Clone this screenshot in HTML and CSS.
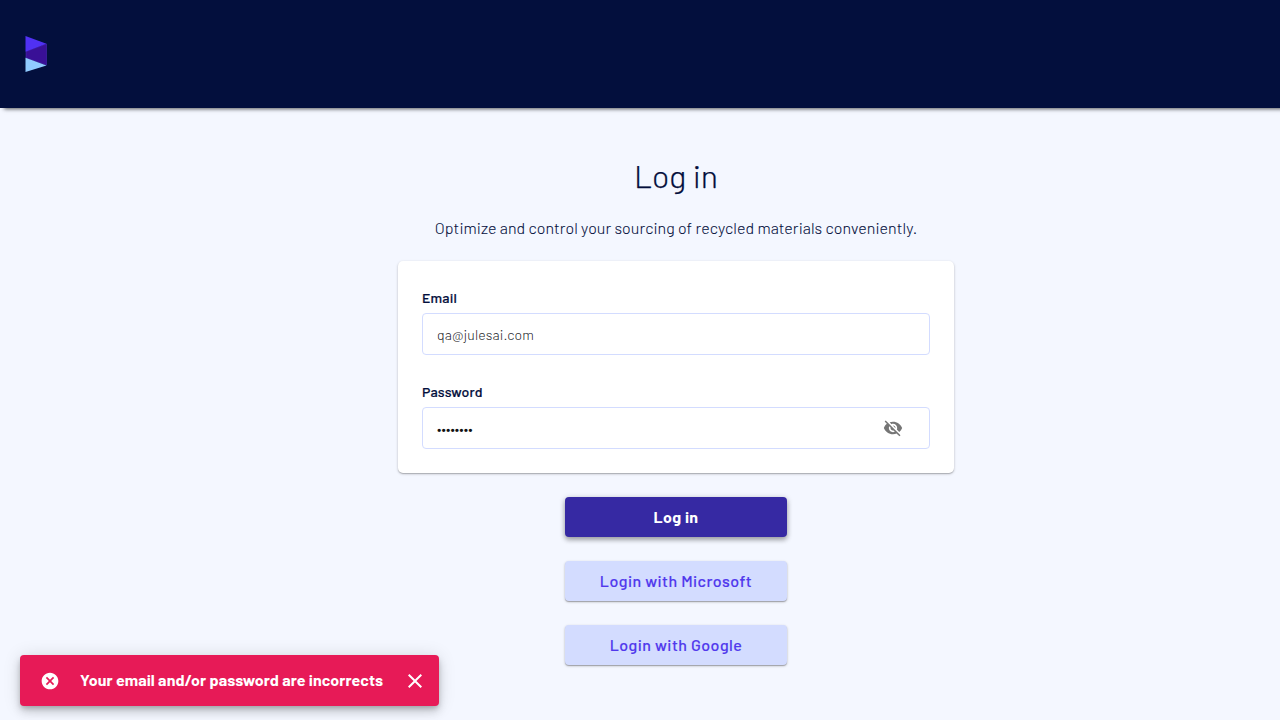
FILE: index.html
```html
<!DOCTYPE html>
<html lang="en">
<head>
<meta charset="utf-8">
<title>Log in</title>
<link rel="stylesheet" href="styles.css">
</head>
<body>
<header class="topbar">
  <svg class="logo" width="24" height="38" viewBox="0 0 24 38" aria-label="Logo">
    <path fill="#391096" stroke="#4925b5" stroke-width=".6" d="M1 16.500 21.500 9v21L1 23z"/>
    <path fill="#5031f3" d="M.5 1 21.500 8.800 .5 16.700z"/>
    <path fill="#90cbff" d="M.5 22.800 21.500 30.400 .5 37z"/>
  </svg>
</header>
<main class="content">
  <h1 class="title">Log in</h1>
  <p class="subtitle">Optimize and control your sourcing of recycled materials conveniently.</p>
  <form class="form">
    <section class="card">
      <div class="field">
        <label class="label" for="email">Email</label>
        <div class="control"><input class="input" id="email" type="text" value="qa@julesai.com"></div>
      </div>
      <div class="field">
        <label class="label" for="password">Password</label>
        <div class="control">
          <span class="input dots" id="password">••••••••</span>
          <svg class="eye" width="20" height="20" viewBox="0 0 24 24"><path fill="#757575" d="M12 7c2.760 0 5 2.240 5 5 0 .650-.130 1.260-.360 1.830l2.920 2.920c1.510-1.260 2.700-2.890 3.430-4.750-1.730-4.390-6-7.500-11-7.500-1.400 0-2.740.250-3.980.700l2.160 2.160C10.740 7.130 11.350 7 12 7zM2 4.270l2.280 2.280.460.460C3.080 8.300 1.780 10.020 1 12c1.730 4.390 6 7.500 11 7.500 1.550 0 3.030-.300 4.380-.840l.420.420L19.730 22 21 20.730 3.270 3 2 4.270zM7.530 9.800l1.550 1.550c-.050.210-.080.430-.080.650 0 1.660 1.340 3 3 3 .220 0 .440-.030.650-.080l1.550 1.550c-.670.330-1.410.530-2.200.530-2.760 0-5-2.240-5-5 0-.790.200-1.530.530-2.200zm4.310-.780l3.150 3.150.020-.160c0-1.660-1.340-3-3-3l-.170.010z"/></svg>
        </div>
      </div>
    </section>
    <button class="btn primary" type="button">Log in</button>
    <button class="btn secondary" type="button">Login with Microsoft</button>
    <button class="btn secondary" type="button">Login with Google</button>
  </form>
</main>
<aside class="snackbar" role="alert">
  <svg class="error-icon" width="20" height="20" viewBox="0 0 24 24"><path fill="#fff" d="M12 2C6.470 2 2 6.470 2 12s4.470 10 10 10 10-4.470 10-10S17.530 2 12 2zm5 13.590L15.590 17 12 13.410 8.410 17 7 15.590 10.590 12 7 8.410 8.410 7 12 10.590 15.590 7 17 8.410 13.410 12 17 15.590z"/></svg>
  <span class="message">Your email and/or password are incorrects</span>
  <svg class="close" width="24" height="24" viewBox="0 0 24 24"><path fill="#fff" d="M19 6.410L17.590 5 12 10.590 6.410 5 5 6.410 10.590 12 5 17.590 6.410 19 12 13.410 17.590 19 19 17.590 13.410 12z"/></svg>
</aside>
</body>
</html>
```
FILE: styles.css
```css
* { box-sizing: border-box; }
body {
  margin: 0;
  height: 720px;
  overflow: hidden;
  background: #f4f7ff;
  color: #030e3c;
  font-family: Barlow, Roboto, "Liberation Sans", sans-serif;
}
.topbar {
  height: 108px;
  padding: 35px 25px;
  background: #030f3d;
  box-shadow: 4px 1px 4px rgba(0,0,0,.65);
}
.logo { display: block; }
.content {
  display: flex;
  flex-direction: column;
  align-items: center;
  padding: 47px 0 0 72px;
}
.title { margin: 0; font-size: 32px; font-weight: 300; line-height: 40px; -webkit-text-stroke: .25px #030e3c; }
.subtitle { margin: 21px 0 0; font-size: 16px; font-weight: 300; line-height: 24px; letter-spacing: .045px; -webkit-text-stroke: .1px #030e3c; }
.form { display: flex; flex-direction: column; align-items: center; gap: 24px; margin-top: 21px; }
.card {
  display: flex;
  flex-direction: column;
  gap: 28px;
  width: 556px;
  height: 212px;
  padding: 27px 24px 24px;
  border-radius: 5px;
  background: #fff;
  box-shadow: 0 1px 3px rgba(0,0,0,.2), 0 1px 1px rgba(0,0,0,.18);
}
.field { display: flex; flex-direction: column; gap: 5px; }
.field + .field { margin-top: -1px; }
.label { font-size: 14px; font-weight: 500; line-height: 20px; letter-spacing: .18px; -webkit-text-stroke: .2px #030e3c; }
.control {
  display: flex;
  align-items: center;
  height: 42px;
  padding: 2px 26px 0 14px;
  border: 1px solid #d3dcff;
  border-radius: 4px;
}
.input {
  flex: 1;
  min-width: 0;
  padding: 0;
  border: 0;
  outline: 0;
  background: none;
  color: #18181e;
  font: 300 14px/20px Barlow, Roboto, sans-serif;
  letter-spacing: .14px;
}
.dots { color: #111; font-weight: 400; }
.eye { margin-top: -2px; }
.btn {
  width: 222px;
  height: 40px;
  padding: 0;
  border: 0;
  border-radius: 4px;
  font: 500 16px/24px Barlow, Roboto, sans-serif;
  letter-spacing: .45px;
}
.primary {
  background: #3629a3;
  color: #fff;
  font-weight: 700;
  letter-spacing: .3px;
  box-shadow: 0 3px 5px rgba(0,0,0,.28), 0 1px 6px rgba(0,0,0,.18);
}
.secondary {
  background: #d3dcff;
  color: #5038ed;
  -webkit-text-stroke: .15px #5038ed;
  box-shadow: 0 1px 3px rgba(0,0,0,.2), 0 1px 1px rgba(0,0,0,.24);
}
.snackbar {
  position: absolute;
  left: 20px;
  top: 655px;
  display: flex;
  align-items: center;
  width: 419px;
  height: 51px;
  padding: 0 12px 0 20px;
  border-radius: 4px;
  background: #e71a57;
  color: #fff;
  box-shadow: 0 3px 5px -1px rgba(0,0,0,.2), 0 6px 10px rgba(0,0,0,.14), 0 1px 18px rgba(0,0,0,.12);
}
.message { flex: 1; margin: -2px 0 0 20px; font-size: 16px; font-weight: 700; line-height: 24px; letter-spacing: .075px; white-space: nowrap; }
```
